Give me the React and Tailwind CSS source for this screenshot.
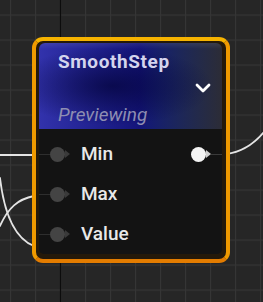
import React from 'react';

// pins on the left side of the node
const inputs = ['Min', 'Max', 'Value'];

function InputPin() {
  return (
    <div className="relative flex items-center w-[26px] h-[15px]">
      <div className="w-[15px] h-[15px] rounded-full bg-[#444444]" />
      <div className="w-0 h-0 border-y-[4px] border-y-transparent border-l-[5px] border-l-[#3a3a3a]" />
    </div>
  );
}

export default function App() {
  return (
    <div
      className="relative w-[263px] h-[302px] overflow-hidden bg-[#262626]"
      style={{ fontFamily: 'Roboto, "Open Sans", Arial, sans-serif' }}
    >
      {/* canvas: grid + wires */}
      <svg className="absolute inset-0" width="263" height="302">
        <defs>
          <pattern id="grid" x="10" y="14.5" width="25" height="25" patternUnits="userSpaceOnUse">
            <line x1="0.5" y1="0" x2="0.5" y2="25" stroke="#353535" strokeWidth="1.2" />
            <line x1="0" y1="0.5" x2="25" y2="0.5" stroke="#353535" strokeWidth="1.2" />
          </pattern>
        </defs>
        <rect width="263" height="302" fill="url(#grid)" />
        <line x1="60.5" y1="0" x2="60.5" y2="302" stroke="#0c0c0c" strokeWidth="1.2" />
        <g fill="none" stroke="#e4e4e4" strokeWidth="1.8" strokeLinecap="round">
          <path d="M0 155 L34 155" />
          <path d="M0 178 C 4 212, 14 238, 34 246" />
          <path d="M0 226 C 8 208, 18 199, 34 196" />
          <path d="M226 154 C 243 152, 254 144, 264 132" />
        </g>
      </svg>

      {/* node */}
      <div className="absolute left-[32px] top-[37px] w-[198px] h-[226px] rounded-[11px] border-[4px] border-t-[#f6b300] border-x-[#f09a00] border-b-[#e37c00] bg-[#24190a] pl-[3px] pr-[4px] pt-[2px] pb-[5px] flex flex-col">
        {/* header */}
        <div className="relative h-[88px] rounded-t-[6px] overflow-hidden bg-gradient-to-r from-[#3232ac] via-[#14147a] via-55% to-[#2c2c36]">
          <div className="absolute inset-0 bg-[radial-gradient(ellipse_at_40%_50%,rgba(4,4,60,0.75),transparent_65%)]" />
          <div className="absolute inset-x-0 top-0 h-[6px] bg-gradient-to-b from-[rgba(255,255,255,0.08)] to-transparent" />
          <div className="relative flex flex-col pl-[19px] pr-[11px] pt-[7px]">
            <div className="text-[19px] leading-[23px] font-bold text-[#d4d4ee] tracking-[0.6px]">SmoothStep</div>
            <div className="flex justify-end mt-[10px] h-[10px]">
              <svg width="16" height="10" viewBox="0 0 16 10">
                <polyline points="2,2 8,8 14,2" fill="none" stroke="#ffffff" strokeWidth="2.8" strokeLinecap="round" strokeLinejoin="round" />
              </svg>
            </div>
            <div className="mt-[10px] text-[19px] leading-[23px] italic text-[#8e8eb2]">Previewing</div>
          </div>
        </div>

        {/* body */}
        <div className="flex-1 rounded-b-[5px] bg-[#131313] pt-[5px] flex flex-col">
          {inputs.map((name, i) => (
            <div key={name} className="relative flex items-center h-[40px]">
              <div className="w-[11px] h-[1px] bg-[#2e2e2e]" />
              <InputPin />
              <span className="ml-[5px] text-[19px] leading-[22px] font-medium text-[#e8e8e8]">{name}</span>
              {i === 0 && (
                <div className="ml-auto flex items-center">
                  <div className="w-[15px] h-[15px] rounded-full bg-[#f4f4f4]" />
                  <div className="w-0 h-0 border-y-[4px] border-y-transparent border-l-[5px] border-l-[#cfcfcf]" />
                  <div className="w-[11px] h-[1px] bg-[#3a3a3a]" />
                </div>
              )}
            </div>
          ))}
        </div>
      </div>
    </div>
  );
}
